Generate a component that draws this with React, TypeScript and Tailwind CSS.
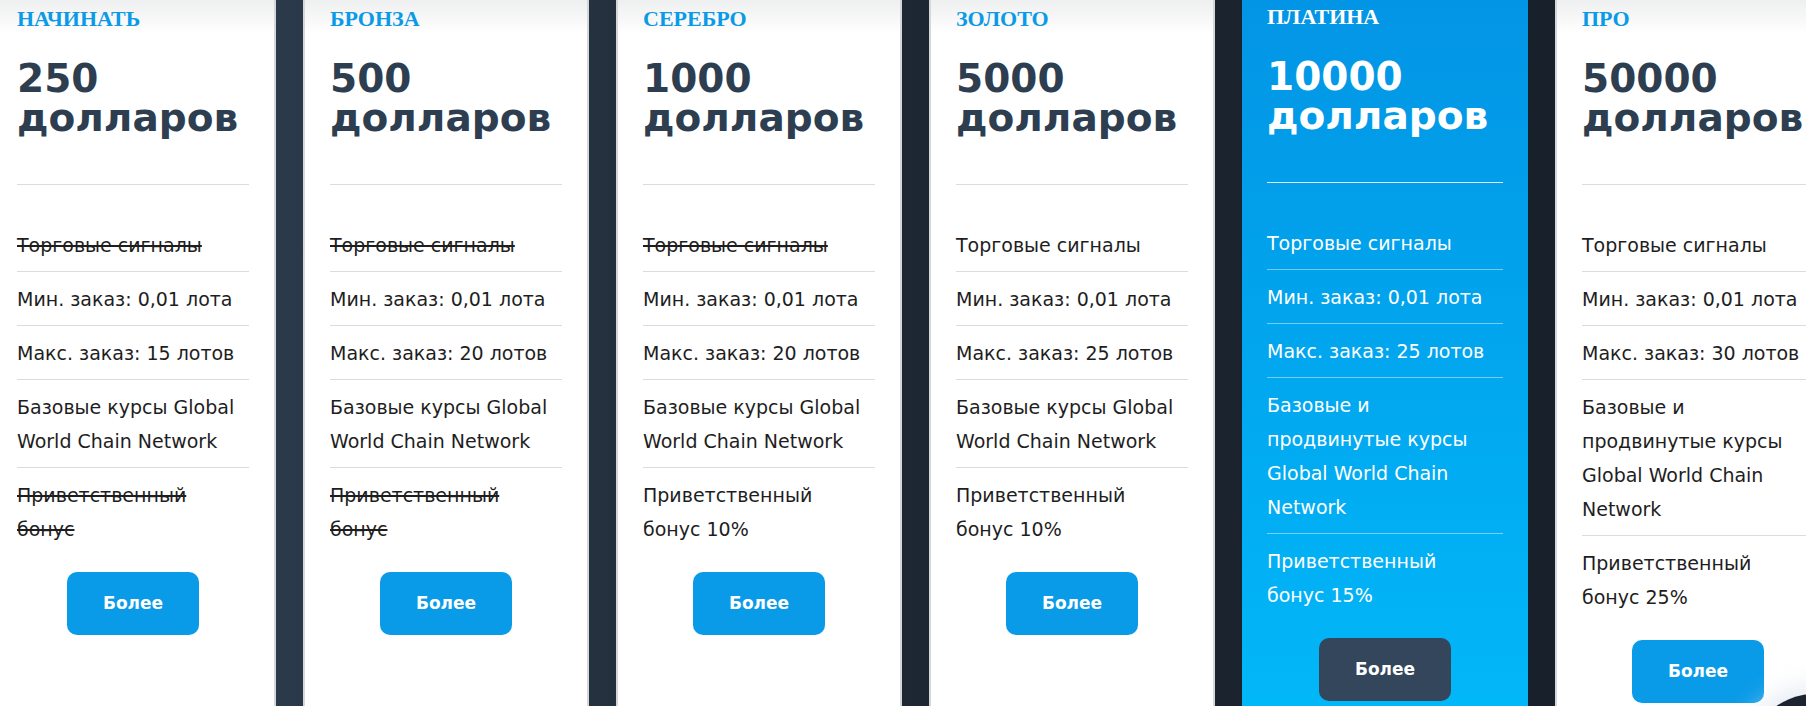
import React from 'react';

type Feature = { text: string; off?: boolean };

type Plan = {
  name: string;
  price: string;
  features: Feature[];
  featured?: boolean;
};

const basic = 'Базовые курсы Global World Chain Network';
const advanced = 'Базовые и продвинутые курсы Global World Chain Network';

const plans: Plan[] = [
  {
    name: 'Начинать',
    price: '250',
    features: [
      { text: 'Торговые сигналы', off: true },
      { text: 'Мин. заказ: 0,01 лота' },
      { text: 'Макс. заказ: 15 лотов' },
      { text: basic },
      { text: 'Приветственный бонус', off: true },
    ],
  },
  {
    name: 'Бронза',
    price: '500',
    features: [
      { text: 'Торговые сигналы', off: true },
      { text: 'Мин. заказ: 0,01 лота' },
      { text: 'Макс. заказ: 20 лотов' },
      { text: basic },
      { text: 'Приветственный бонус', off: true },
    ],
  },
  {
    name: 'Серебро',
    price: '1000',
    features: [
      { text: 'Торговые сигналы', off: true },
      { text: 'Мин. заказ: 0,01 лота' },
      { text: 'Макс. заказ: 20 лотов' },
      { text: basic },
      { text: 'Приветственный бонус 10%' },
    ],
  },
  {
    name: 'Золото',
    price: '5000',
    features: [
      { text: 'Торговые сигналы' },
      { text: 'Мин. заказ: 0,01 лота' },
      { text: 'Макс. заказ: 25 лотов' },
      { text: basic },
      { text: 'Приветственный бонус 10%' },
    ],
  },
  {
    name: 'Платина',
    price: '10000',
    featured: true,
    features: [
      { text: 'Торговые сигналы' },
      { text: 'Мин. заказ: 0,01 лота' },
      { text: 'Макс. заказ: 25 лотов' },
      { text: advanced },
      { text: 'Приветственный бонус 15%' },
    ],
  },
  {
    name: 'Про',
    price: '50000',
    features: [
      { text: 'Торговые сигналы' },
      { text: 'Мин. заказ: 0,01 лота' },
      { text: 'Макс. заказ: 30 лотов' },
      { text: advanced },
      { text: 'Приветственный бонус 25%' },
    ],
  },
];

const PlanCard: React.FC<{ plan: Plan }> = ({ plan }) => {
  const hot = plan.featured;
  return (
    <div
      className={`w-[286px] shrink-0 px-[25px] ${
        hot
          ? 'bg-gradient-to-b from-[#0395e5] to-[#02b7f8] pt-[6px] text-white'
          : 'border-x-2 border-[#d5d7da] bg-[linear-gradient(180deg,#eeeff0_0px,#ffffff_34px)] pt-[8px] text-[#1e1e1e]'
      }`}
    >
      <h3
        className={`font-['Liberation_Serif',serif] text-[22px] leading-[22px] font-bold uppercase ${
          hot ? 'text-white' : 'text-[#0b9ae6]'
        }`}
      >
        {plan.name}
      </h3>
      <div className={`mt-[29px] text-[39px] leading-[39px] font-bold ${hot ? 'text-white' : 'text-[#2d3e50]'}`}>
        <div>{plan.price}</div>
        <div>долларов</div>
      </div>
      <div className={`mt-[47px] border-t ${hot ? 'border-white/85' : 'border-[#dcdcdc]'}`} />
      <ul className="mt-[33px]">
        {plan.features.map((f, i) => {
          const last = i === plan.features.length - 1;
          return (
            <li
              key={f.text}
              className={`text-[19px] leading-[34px] ${
                last ? 'py-[10px]' : `pt-[10px] pb-[9px] border-b ${hot ? 'border-white/45' : 'border-[#dcdcdc]'}`
              }`}
            >
              <span className={`block max-w-[228px] ${f.off ? 'line-through decoration-2' : ''}`}>{f.text}</span>
            </li>
          );
        })}
      </ul>
      <div className="mt-[16px] flex justify-center">
        <button
          className={`h-[63px] w-[132px] rounded-[10px] text-[17px] font-bold text-white ${
            hot ? 'bg-[#33465b]' : 'bg-[#0a9be8]'
          }`}
        >
          Более
        </button>
      </div>
    </div>
  );
};

export default function App() {
  return (
    <div className="relative h-[706px] w-full overflow-hidden bg-[linear-gradient(90deg,#2c3c4d_12%,#1c2530_55%,#161e28_100%)] font-['DejaVu_Sans',sans-serif]">
      <div className="ml-[-10px] flex h-full gap-[27px]">
        {plans.map((p) => (
          <PlanCard key={p.name} plan={p} />
        ))}
      </div>
      {/* chat bubble peeking from the corner */}
      <div className="absolute left-[1747px] top-[694px] h-[136px] w-[136px] rounded-full bg-[#1b2430] shadow-[0_0_24px_8px_rgba(220,228,240,0.7)]" />
    </div>
  );
}
